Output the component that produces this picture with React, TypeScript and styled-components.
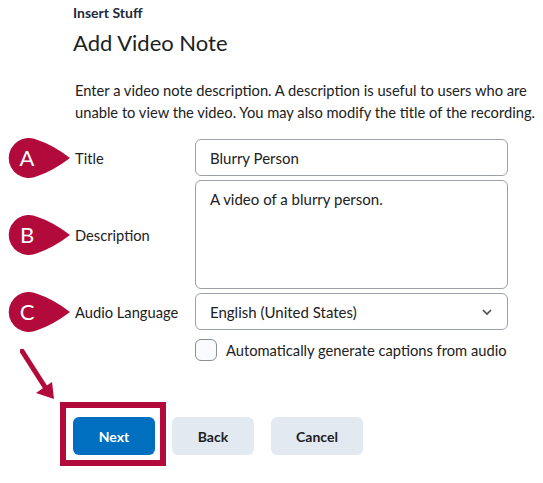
import styled, { createGlobalStyle } from 'styled-components';

const GlobalStyle = createGlobalStyle`
  body {
    margin: 0;
    background: #ffffff;
    font-family: Lato, "Open Sans", sans-serif;
    color: #202122;
  }
`;

const RED = '#b10a3b';

const Page = styled.div`
  width: 543px;
  height: 483px;
  box-sizing: border-box;
  padding: 4px 0 0 0;
  overflow: hidden;
`;

const Header = styled.div`
  padding-left: 73px;
`;

const Crumb = styled.div`
  font-size: 14px;
  font-weight: 700;
  line-height: 18px;
  color: #1e2a3b;
`;

const Heading = styled.h1`
  margin: 7px 0 0 0;
  font-size: 22px;
  font-weight: 400;
  line-height: 28px;
  color: #202122;
`;

const Intro = styled.p`
  margin: 22px 0 0 75px;
  width: 468px;
  font-size: 14.7px;
  line-height: 22px;
`;

const Form = styled.div`
  margin-top: 16px;
  display: grid;
  grid-template-columns: 188px 313px;
  grid-template-rows: 37px 109px 37px;
  row-gap: 4px;
  padding-left: 7px;
`;

const LabelCell = styled.div`
  display: flex;
  align-items: center;
  gap: 5px;
`;

const Label = styled.label`
  font-size: 14.7px;
`;

const Field = styled.div<{ $tall?: boolean }>`
  box-sizing: border-box;
  border: 1px solid #9da2a8;
  border-radius: 6px;
  display: flex;
  align-items: ${(p) => (p.$tall ? 'flex-start' : 'center')};
  justify-content: space-between;
  padding: ${(p) => (p.$tall ? '9px 14px' : '0 14px')};
  font-size: 15px;
  color: #202122;
`;

const CheckRow = styled.div`
  margin: 9px 0 0 195px;
  display: flex;
  align-items: center;
  gap: 9px;
  font-size: 14.7px;
`;

const CheckBox = styled.span`
  box-sizing: border-box;
  width: 22px;
  height: 22px;
  border: 1px solid #8a8f96;
  border-radius: 6px;
  background: #f9fbff;
`;

const Buttons = styled.div`
  margin: 56px 0 0 73px;
  display: flex;
  gap: 17px;
`;

const Button = styled.button<{ $primary?: boolean; $w: number }>`
  width: ${(p) => p.$w}px;
  height: 38px;
  border: none;
  border-radius: 6px;
  background: ${(p) => (p.$primary ? '#006fbf' : '#e3e9f1')};
  color: ${(p) => (p.$primary ? '#ffffff' : '#202122')};
  font-family: Lato, sans-serif;
  font-size: 14px;
  font-weight: 700;
`;

const Highlight = styled.div`
  position: relative;
  display: flex;

  &::after {
    content: '';
    position: absolute;
    left: -13px;
    right: -11px;
    top: -15px;
    bottom: -11px;
    border: 6px solid ${RED};
  }
`;

const Arrow = styled.svg`
  position: absolute;
  left: -53px;
  top: -68px;
`;

function Marker({ letter }: { letter: string }) {
  return (
    <svg width="63" height="40" viewBox="0 0 63 40">
      <path
        d="M63 20 Q46 7 30 1.8 A20 20 0 1 0 30 38.2 Q46 33 63 20 Z"
        fill={RED}
      />
      <text
        x="20"
        y="28"
        textAnchor="middle"
        fill="#fff"
        fontSize="22"
        fontFamily="Lato, sans-serif"
      >
        {letter}
      </text>
    </svg>
  );
}

export default function App() {
  return (
    <Page>
      <GlobalStyle />
      <Header>
        <Crumb>Insert Stuff</Crumb>
        <Heading>Add Video Note</Heading>
      </Header>
      <Intro>
        Enter a video note description. A description is useful to users who are
        unable to view the video. You may also modify the title of the recording.
      </Intro>
      <Form>
        <LabelCell>
          <Marker letter="A" />
          <Label>Title</Label>
        </LabelCell>
        <Field>Blurry Person</Field>
        <LabelCell>
          <Marker letter="B" />
          <Label>Description</Label>
        </LabelCell>
        <Field $tall>A video of a blurry person.</Field>
        <LabelCell>
          <Marker letter="C" />
          <Label>Audio Language</Label>
        </LabelCell>
        <Field>
          English (United States)
          <svg width="12" height="8" viewBox="0 0 12 8">
            <path d="M2 2 L6 6 L10 2" stroke="#494c4e" strokeWidth="1.6" fill="none" />
          </svg>
        </Field>
      </Form>
      <CheckRow>
        <CheckBox />
        Automatically generate captions from audio
      </CheckRow>
      <Buttons>
        <Highlight>
          <Arrow width="40" height="58" viewBox="0 0 40 58">
            <path d="M2 2 L25 38" stroke={RED} strokeWidth="5" strokeLinecap="round" />
            <path d="M16 44 L32 33 L34 50 Z" fill={RED} />
          </Arrow>
          <Button $primary $w={82}>Next</Button>
        </Highlight>
        <Button $w={82}>Back</Button>
        <Button $w={92}>Cancel</Button>
      </Buttons>
    </Page>
  );
}
